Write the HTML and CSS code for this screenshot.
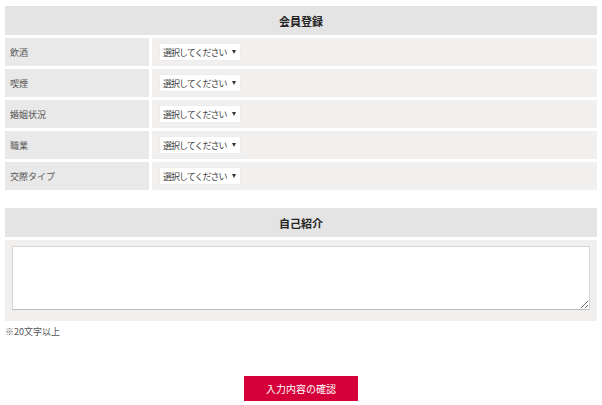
FILE: index.html
```html
<!DOCTYPE html>
<html lang="ja">
<head>
<meta charset="utf-8">
<title>会員登録</title>
<link rel="stylesheet" href="styles.css">
</head>
<body>
<main class="page">
  <section class="block">
    <h2 class="block-title">会員登録</h2>
    <div class="rows">
      <div class="row"><div class="label">飲酒</div><div class="value"><span class="select">選択してください<span class="caret"></span></span></div></div>
      <div class="row"><div class="label">喫煙</div><div class="value"><span class="select">選択してください<span class="caret"></span></span></div></div>
      <div class="row"><div class="label">婚姻状況</div><div class="value"><span class="select">選択してください<span class="caret"></span></span></div></div>
      <div class="row"><div class="label">職業</div><div class="value"><span class="select">選択してください<span class="caret"></span></span></div></div>
      <div class="row"><div class="label">交際タイプ</div><div class="value"><span class="select">選択してください<span class="caret"></span></span></div></div>
    </div>
  </section>
  <section class="block block-intro">
    <h2 class="block-title">自己紹介</h2>
    <div class="intro-box"><textarea class="intro-text"></textarea></div>
    <p class="note">※20文字以上</p>
  </section>
  <div class="actions"><button class="confirm" type="button">入力内容の確認</button></div>
</main>
</body>
</html>
```

FILE: styles.css
```css
* { box-sizing: border-box; }
html, body { margin: 0; padding: 0; background: #ffffff; }
body {
  font-family: "Noto Sans CJK JP", "Noto Sans", sans-serif;
  color: #333333;
  font-size: 10px;
}
.page { padding: 6px 5px 0 5px; }
.block-title {
  margin: 0;
  height: 29px;
  background: #e4e4e4;
  font-size: 11px;
  font-weight: bold;
  color: #222222;
  display: flex;
  align-items: center;
  justify-content: center;
}
.rows {
  margin-top: 3px;
  display: flex;
  flex-direction: column;
  gap: 3px;
}
.row {
  display: grid;
  grid-template-columns: 144px 1fr;
  column-gap: 3px;
  height: 28px;
}
.label {
  background: #e9e9e9;
  display: flex;
  align-items: center;
  padding-left: 5px;
  font-size: 9px;
  color: #555555;
}
.value {
  background: #f1f0ee;
  display: flex;
  align-items: center;
  padding-left: 7px;
}
.select {
  display: inline-flex;
  align-items: center;
  width: 82px;
  height: 18px;
  background: #ffffff;
  border: 1px solid #ececec;
  padding-left: 3px;
  font-size: 9px;
  letter-spacing: -1px;
  color: #444444;
  white-space: nowrap;
}
.caret {
  width: 0;
  height: 0;
  margin-left: 6px;
  border-left: 2px solid transparent;
  border-right: 2px solid transparent;
  border-top: 4px solid #333333;
}
.block-intro { margin-top: 18px; }
.intro-box {
  margin-top: 3px;
  background: #f1f0ee;
  padding: 6px 7px 11px 7px;
}
.intro-text {
  display: block;
  width: 100%;
  height: 64px;
  border: 1px solid #d6d6d6;
  border-bottom-color: #bdbdbd;
  background: #ffffff;
  resize: vertical;
}
.note {
  margin: 4px 0 0 0;
  font-size: 9px;
  color: #555555;
}
.actions {
  display: flex;
  justify-content: center;
  margin-top: 38px;
}
.confirm {
  width: 114px;
  height: 25px;
  border: none;
  background: #d5003a;
  color: #ffffff;
  font-family: "Noto Sans CJK JP", "Noto Sans", sans-serif;
  font-size: 10px;
  padding: 0;
}
```
